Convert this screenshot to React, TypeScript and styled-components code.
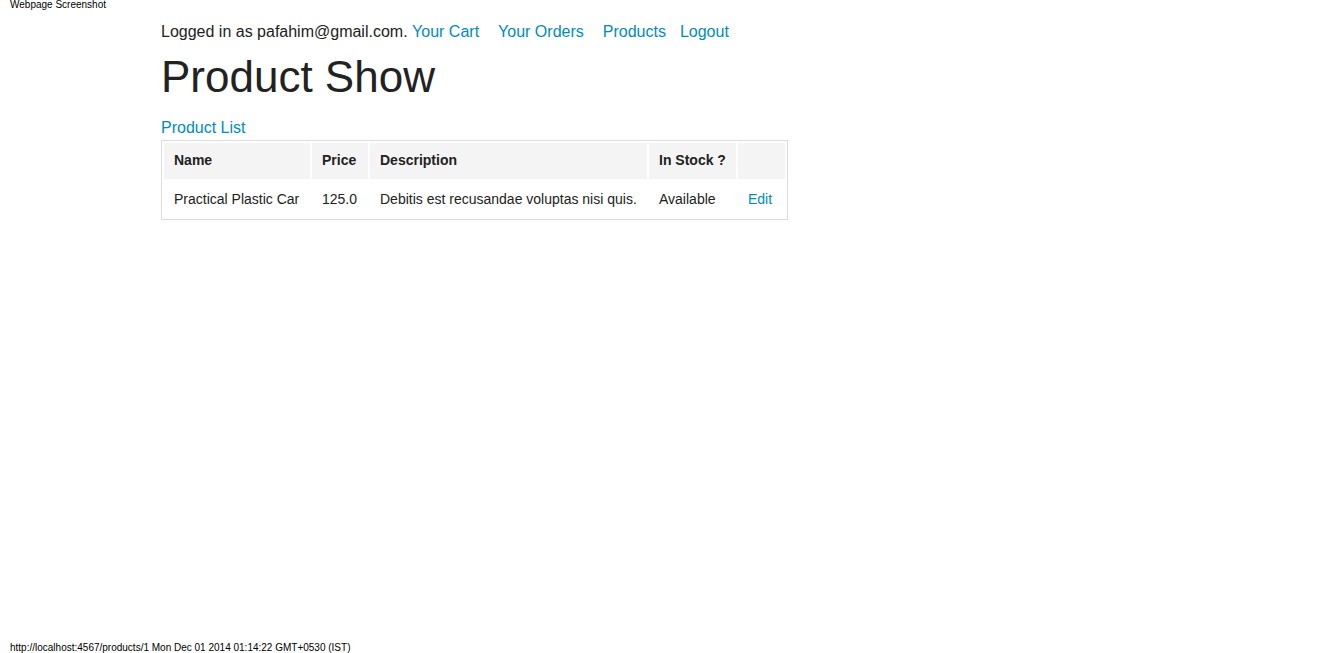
import React from "react";
import styled, { createGlobalStyle } from "styled-components";

const GlobalStyle = createGlobalStyle`
  html, body {
    margin: 0;
    padding: 0;
    background: #ffffff;
  }
  body {
    font-family: "Liberation Sans", Arial, sans-serif;
    color: #222222;
  }
  * { box-sizing: border-box; }
`;

const Page = styled.div`
  display: flex;
  flex-direction: column;
  min-height: 653px;
`;

const PrintHeader = styled.div`
  font-family: "Liberation Sans", Arial, sans-serif;
  font-size: 10px;
  line-height: 10px;
  color: #000;
  padding-left: 10px;
  height: 12px;
`;

const PrintFooter = styled.div`
  font-family: "Liberation Sans", Arial, sans-serif;
  font-size: 10px;
  line-height: 11px;
  color: #000;
  padding-left: 10px;
  height: 11px;
`;

const Main = styled.main`
  flex: 1;
  width: 999px;
  margin: 0 auto;
  padding-top: 8px;
`;

const Nav = styled.div`
  font-size: 16px;
  line-height: 24px;
  color: #222222;
  white-space: nowrap;
`;

const NavLink = styled.a<{ $gap: number }>`
  color: #008cba;
  text-decoration: none;
  margin-left: ${(p) => p.$gap}px;
`;

const Title = styled.h1`
  font-size: 44px;
  font-weight: normal;
  line-height: 1.4;
  margin: 2px 0 8px;
  color: #222222;
`;

const ListLink = styled.a`
  display: block;
  font-size: 16px;
  line-height: 24px;
  color: #008cba;
  text-decoration: none;
`;

const Table = styled.table`
  border: 1px solid #dddddd;
  border-spacing: 2px;
  background: #ffffff;
`;

const Th = styled.th<{ $w: number }>`
  width: ${(p) => p.$w}px;
  background: #f4f4f4;
  font-size: 14px;
  font-weight: bold;
  line-height: 18px;
  padding: 8px 10px 10px;
  text-align: left;
  color: #222222;
  white-space: nowrap;
`;

const Td = styled.td`
  font-size: 14px;
  line-height: 18px;
  padding: 9px 10px;
  text-align: left;
  color: #222222;
  white-space: nowrap;
`;

const CellLink = styled.a`
  color: #008cba;
  text-decoration: none;
`;

export default function App() {
  return (
    <>
      <GlobalStyle />
      <Page>
        <PrintHeader>Webpage Screenshot</PrintHeader>
        <Main>
          <Nav>
            Logged in as pafahim@gmail.com.
            <NavLink href="#" $gap={4.5}>Your Cart</NavLink>
            <NavLink href="#" $gap={19}>Your Orders</NavLink>
            <NavLink href="#" $gap={19}>Products</NavLink>
            <NavLink href="#" $gap={14}>Logout</NavLink>
          </Nav>
          <Title>Product Show</Title>
          <ListLink href="#">Product List</ListLink>
          <Table>
            <thead>
              <tr>
                <Th $w={146}>Name</Th>
                <Th $w={56}>Price</Th>
                <Th $w={277}>Description</Th>
                <Th $w={87}>In Stock ?</Th>
                <Th $w={47}></Th>
              </tr>
            </thead>
            <tbody>
              <tr>
                <Td>Practical Plastic Car</Td>
                <Td>125.0</Td>
                <Td>Debitis est recusandae voluptas nisi quis.</Td>
                <Td>Available</Td>
                <Td>
                  <CellLink href="#">Edit</CellLink>
                </Td>
              </tr>
            </tbody>
          </Table>
        </Main>
        <PrintFooter>
          http://localhost:4567/products/1 Mon Dec 01 2014 01:14:22 GMT+0530 (IST)
        </PrintFooter>
      </Page>
    </>
  );
}
